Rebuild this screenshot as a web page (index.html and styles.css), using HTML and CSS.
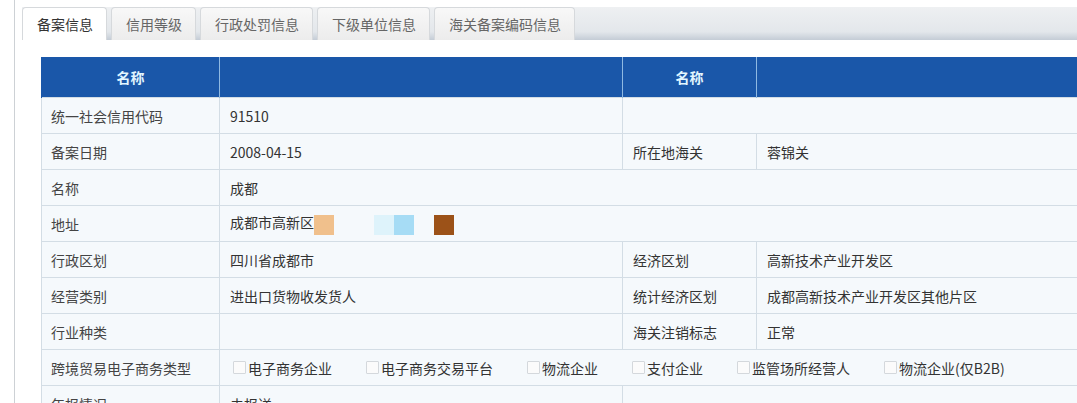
FILE: index.html
```html
<!DOCTYPE html>
<html lang="zh-CN">
<head>
    <meta charset="UTF-8">
    <meta name="viewport" content="width=device-width, initial-scale=1.0">
    <title>备案信息</title>
    <link rel="stylesheet" href="styles.css">
</head>
<body>
    <div class="panel">
        <div class="tabs">
            <div class="tab active">备案信息</div>
            <div class="tab">信用等级</div>
            <div class="tab">行政处罚信息</div>
            <div class="tab">下级单位信息</div>
            <div class="tab">海关备案编码信息</div>
        </div>
        <div class="content">
            <table class="info">
                <colgroup>
                    <col class="c1">
                    <col class="c2">
                    <col class="c3">
                    <col class="c4">
                </colgroup>
                <tr class="head">
                    <th>名称</th>
                    <th></th>
                    <th>名称</th>
                    <th></th>
                </tr>
                <tr>
                    <td>统一社会信用代码</td>
                    <td>91510</td>
                    <td colspan="2"></td>
                </tr>
                <tr>
                    <td>备案日期</td>
                    <td>2008-04-15</td>
                    <td>所在地海关</td>
                    <td>蓉锦关</td>
                </tr>
                <tr>
                    <td>名称</td>
                    <td colspan="3">成都</td>
                </tr>
                <tr>
                    <td>地址</td>
                    <td colspan="3">成都市高新区<span class="blot orange"></span><span class="blot pale"></span><span class="blot sky"></span><span class="blot brown"></span></td>
                </tr>
                <tr>
                    <td>行政区划</td>
                    <td>四川省成都市</td>
                    <td>经济区划</td>
                    <td>高新技术产业开发区</td>
                </tr>
                <tr>
                    <td>经营类别</td>
                    <td>进出口货物收发货人</td>
                    <td>统计经济区划</td>
                    <td>成都高新技术产业开发区其他片区</td>
                </tr>
                <tr>
                    <td>行业种类</td>
                    <td></td>
                    <td>海关注销标志</td>
                    <td>正常</td>
                </tr>
                <tr>
                    <td>跨境贸易电子商务类型</td>
                    <td colspan="3">
                        <div class="checks">
                            <label class="check"><span class="box"></span>电子商务企业</label>
                            <label class="check"><span class="box"></span>电子商务交易平台</label>
                            <label class="check"><span class="box"></span>物流企业</label>
                            <label class="check"><span class="box"></span>支付企业</label>
                            <label class="check"><span class="box"></span>监管场所经营人</label>
                            <label class="check"><span class="box"></span>物流企业(仅B2B)</label>
                        </div>
                    </td>
                </tr>
                <tr>
                    <td>年报情况</td>
                    <td>未报送</td>
                    <td colspan="2"></td>
                </tr>
            </table>
        </div>
    </div>
</body>
</html>
```

FILE: styles.css
```css
body {
    margin: 0;
    background: #fff;
    font-family: "Noto Sans CJK SC", "Noto Sans", sans-serif;
    font-size: 14px;
    color: #333;
    overflow: hidden;
    height: 403px;
}
.panel {
    margin-left: 14px;
    border-left: 1px solid #cdd1d5;
    padding: 7px 0 0 7px;
    height: 396px;
}
.tabs {
    display: flex;
    gap: 4px;
    height: 33px;
    background: linear-gradient(#eef0f2, #e3e7eb 75%, #c4ccd6);
}
.tab {
    padding: 0 13px 0 14px;
    line-height: 33px;
    border: 1px solid #d6d9dc;
    border-bottom: none;
    border-radius: 4px 4px 0 0;
    background: linear-gradient(#f8f8f8, #ececec);
    color: #666;
    white-space: nowrap;
}
.tab.active {
    background: #fff;
    color: #333;
}
.content {
    padding: 17px 0 0 19px;
}
.info {
    border-collapse: collapse;
    table-layout: fixed;
    width: 1050px;
}
.c1 { width: 178px; }
.c2 { width: 403px; }
.c3 { width: 134px; }
.c4 { width: 335px; }
.info th {
    height: 40px;
    padding: 0;
    background: #1a57a9;
    color: #e2f6ff;
    font-weight: bold;
    text-align: center;
    border-left: 1px solid #8fb9e2;
}
.info th:first-child {
    border-left: 1px solid #1a57a9;
}
.info td {
    height: 35px;
    padding: 0 0 0 10px;
    background: #f5f9fc;
    border: 1px solid #d3dde5;
    white-space: nowrap;
    overflow: hidden;
}
.info td:first-child {
    padding-left: 9px;
    color: #444;
}
.blot {
    display: inline-block;
    width: 20px;
    height: 20px;
    vertical-align: middle;
}
.orange { background: #f0c08c; }
.pale { background: #def3fb; margin-left: 40px; }
.sky { background: #a6dcf5; }
.brown { background: #9c5218; margin-left: 20px; }
.checks {
    display: flex;
    gap: 34px;
    padding-left: 3px;
}
.check {
    display: flex;
    align-items: center;
    gap: 2px;
}
.box {
    width: 11px;
    height: 11px;
    border: 1px solid #d4d8dc;
    background: #fbfbfb;
    border-radius: 1px;
}
```
